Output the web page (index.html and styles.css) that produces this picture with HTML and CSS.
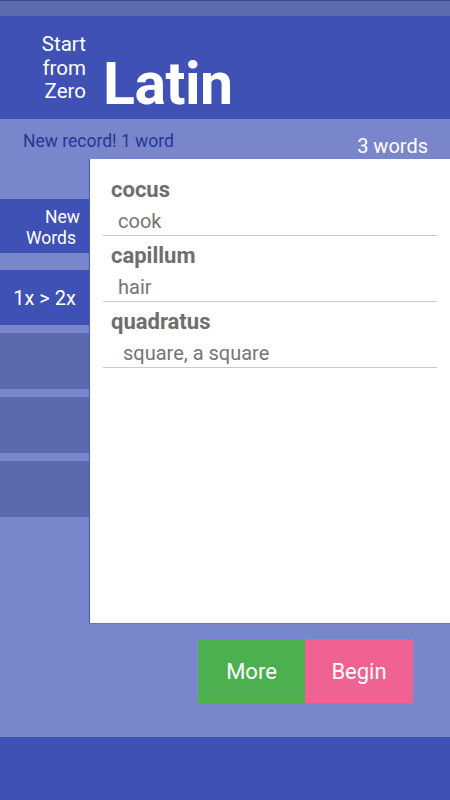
FILE: index.html
```html
<!DOCTYPE html>
<html>
<head>
<meta charset="utf-8">
<link rel="stylesheet" href="styles.css">
</head>
<body>
<div class="screen">
  <div class="status"></div>
  <header class="header">
    <div class="tagline">Start<br>from<br>Zero</div>
    <div class="title">Latin</div>
  </header>
  <main class="main">
    <div class="subbar">
      <span class="record">New record! 1 word</span>
      <span class="count">3 words</span>
    </div>
    <div class="content">
      <nav class="sidebar">
        <div class="tab tab-active tab-new"><span>New</span><span class="w2">Words</span></div>
        <div class="tab tab-active tab-mult">1x &gt; 2x</div>
        <div class="tab tab-empty"></div>
        <div class="tab tab-empty"></div>
        <div class="tab tab-empty"></div>
      </nav>
      <section class="panel">
        <div class="entry">
          <div class="word">cocus</div>
          <div class="meaning">cook</div>
        </div>
        <div class="entry">
          <div class="word">capillum</div>
          <div class="meaning">hair</div>
        </div>
        <div class="entry">
          <div class="word">quadratus</div>
          <div class="meaning meaning-wide">square, a square</div>
        </div>
      </section>
    </div>
    <div class="actions">
      <div class="btn btn-more">More</div>
      <div class="btn btn-begin">Begin</div>
    </div>
  </main>
  <footer class="navbar"></footer>
</div>
</body>
</html>
```
FILE: styles.css
```css
* { box-sizing: border-box; }
html, body { margin: 0; padding: 0; }
body {
  font-family: Roboto, "Noto Sans", sans-serif;
  width: 450px;
  height: 800px;
  overflow: hidden;
}
.screen {
  display: flex;
  flex-direction: column;
  height: 800px;
}
.status {
  height: 16px;
  background: #5c6bae;
  border-top: 1px solid #3d4a8a;
}
.header {
  height: 103px;
  background: #3f51b5;
  display: flex;
  align-items: center;
  color: #fff;
}
.tagline {
  width: 86px;
  text-align: right;
  font-size: 20.5px;
  line-height: 23.5px;
  margin-top: 2px;
}
.title {
  font-size: 59px;
  line-height: 59px;
  font-weight: 700;
  margin-left: 17px;
  align-self: flex-end;
  margin-bottom: 6px;
  letter-spacing: -0.5px;
}
.main {
  height: 618px;
  background: #7986cb;
  display: flex;
  flex-direction: column;
}
.subbar {
  height: 40px;
  display: flex;
  justify-content: space-between;
  padding: 12px 22px 0 23px;
}
.record {
  font-size: 17.5px;
  color: #283593;
  line-height: 20px;
}
.count {
  font-size: 20px;
  color: #fff;
  line-height: 22px;
  margin-top: 4px;
}
.content {
  display: flex;
  height: 464px;
}
.sidebar {
  width: 89px;
  padding-top: 40px;
  display: flex;
  flex-direction: column;
  gap: 8px;
}
.tab {
  height: 56px;
  background: #5b6aae;
}
.tab-active {
  background: #3f51b5;
  color: #fff;
}
.tab-new {
  height: 54px;
  display: flex;
  flex-direction: column;
  align-items: flex-end;
  justify-content: center;
  padding-right: 9px;
  padding-top: 4px;
  font-size: 17.5px;
  line-height: 21px;
  margin-bottom: 9px;
}
.tab-new .w2 { margin-right: 4px; }
.tab-mult {
  height: 55px;
  display: flex;
  align-items: center;
  justify-content: center;
  font-size: 20px;
}
.panel {
  flex: 1;
  background: #fff;
  border-left: 1px solid #4a5bb8;
  padding: 11px 13px 0 13px;
  box-shadow: 0 1px 1px rgba(0,0,0,0.12);
}
.entry {
  height: 66px;
  border-bottom: 1.5px solid #cacaca;
  padding-left: 8px;
  padding-top: 7px;
}
.word {
  font-size: 22px;
  font-weight: 700;
  color: #6e6e6e;
  line-height: 26px;
}
.meaning {
  font-size: 20px;
  color: #757575;
  line-height: 24px;
  margin-top: 6px;
  padding-left: 7px;
}
.meaning-wide { padding-left: 12px; }
.actions {
  display: flex;
  justify-content: flex-end;
  padding: 16px 37px 0 0;
}
.btn {
  height: 64px;
  display: flex;
  align-items: center;
  justify-content: center;
  color: #fff;
  font-size: 22px;
}
.btn-more { width: 107px; background: #4caf50; }
.btn-begin { width: 108px; background: #f06292; }
.navbar {
  height: 63px;
  background: #3f51b5;
}
```
